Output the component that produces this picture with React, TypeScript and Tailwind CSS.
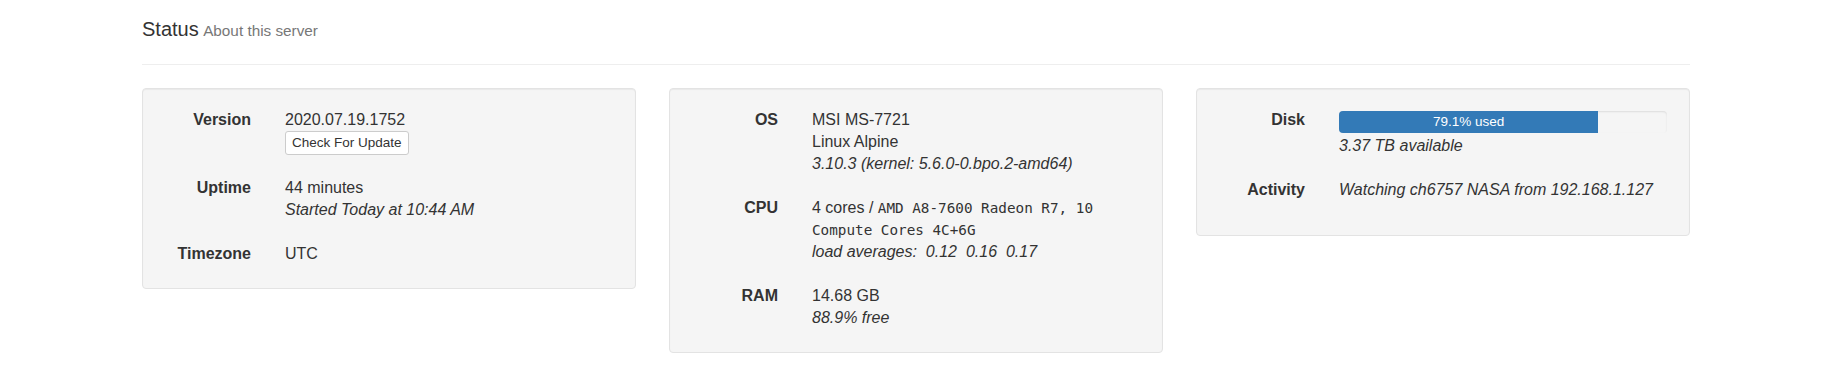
const rows1 = [
  { label: 'Version', key: 'version' },
  { label: 'Uptime', key: 'uptime' },
  { label: 'Timezone', key: 'tz' },
];

function Row({ label, children }: { label: string; children: React.ReactNode }) {
  return (
    <>
      <div className="text-right font-bold">{label}</div>
      <div>{children}</div>
    </>
  );
}

function Well({ children, pb = 'pb-[23px]' }: { children: React.ReactNode; pb?: string }) {
  return (
    <div
      className={`self-start rounded-[4px] border border-[#e3e3e3] bg-[#f5f5f5] pl-[20px] pr-[22px] pt-[20px] ${pb} shadow-[inset_0_1px_1px_rgba(0,0,0,0.05)]`}
    >
      <div className="grid grid-cols-[88px_1fr] gap-x-[34px] gap-y-[22px]">{children}</div>
    </div>
  );
}

export default function App() {
  const diskUsed = 79.1;

  return (
    <div className="min-h-[380px] bg-white font-['Liberation_Sans',Arial,sans-serif] text-[16px] leading-[22px] text-[#333]">
      <div className="ml-[142px] w-[1548px]">
        <div className="border-b border-[#eee] pt-[18px] pb-[22px]">
          <span className="text-[20px] leading-[22px]">Status</span>{' '}
          <span className="text-[15.3px] text-[#777]">About this server</span>
        </div>

        <div className="mt-[23px] grid grid-cols-3 gap-x-[33px]">
          <Well>
            {rows1.map((r) => (
              <Row key={r.key} label={r.label}>
                {r.key === 'version' && (
                  <>
                    <div>2020.07.19.1752</div>
                    <button className="flex h-[24px] items-center rounded-[3px] border border-[#ccc] bg-white px-[6px] text-[13.5px] leading-none text-[#333]">
                      Check For Update
                    </button>
                  </>
                )}
                {r.key === 'uptime' && (
                  <>
                    <div>44 minutes</div>
                    <div className="italic">Started Today at 10:44 AM</div>
                  </>
                )}
                {r.key === 'tz' && <div>UTC</div>}
              </Row>
            ))}
          </Well>

          <Well>
            <Row label="OS">
              <div>MSI MS-7721</div>
              <div>Linux Alpine</div>
              <div className="italic">3.10.3 (kernel: 5.6.0-0.bpo.2-amd64)</div>
            </Row>
            <Row label="CPU">
              <div>
                4 cores /{' '}
                <span className="font-['DejaVu_Sans_Mono',monospace] text-[14.3px]">
                  AMD A8-7600 Radeon R7, 10 Compute Cores 4C+6G
                </span>
              </div>
              <div className="whitespace-pre italic">load averages:  0.12  0.16  0.17</div>
            </Row>
            <Row label="RAM">
              <div>14.68 GB</div>
              <div className="italic">88.9% free</div>
            </Row>
          </Well>

          <Well pb="pb-[34px]">
            <Row label="Disk">
              <div className="mt-[2px] h-[22px] overflow-hidden rounded-[4px] bg-[#f5f5f5] shadow-[inset_0_1px_2px_rgba(0,0,0,0.1)]">
                <div
                  className="flex h-full items-center justify-center bg-[#337ab7] text-[13.5px] leading-none text-white"
                  style={{ width: `${diskUsed}%` }}
                >
                  {diskUsed}% used
                </div>
              </div>
              <div className="mt-[2px] italic">3.37 TB available</div>
            </Row>
            <Row label="Activity">
              <div className="italic">Watching ch6757 NASA from 192.168.1.127</div>
            </Row>
          </Well>
        </div>
      </div>
    </div>
  );
}
